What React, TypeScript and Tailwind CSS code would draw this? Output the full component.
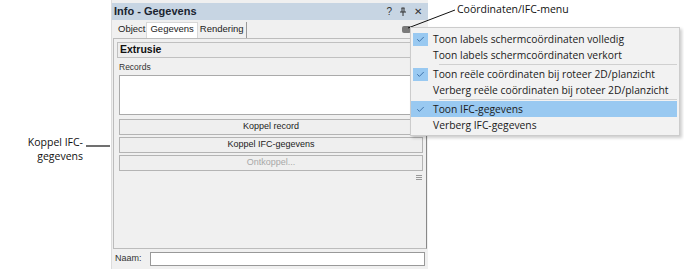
import { Check } from 'lucide-react';

const ui = { fontFamily: '"Liberation Sans", Arial, sans-serif' };
const menuFont = { fontFamily: '"Open Sans", "Noto Sans", sans-serif' };

function MenuItem({ label, checked, active }: { label: string; checked?: boolean; active?: boolean }) {
  return (
    <div className={`flex items-center h-[16px] ${active ? 'bg-[#99c9f1]' : ''}`}>
      <div className="w-[19px] shrink-0 flex justify-center">
        {checked && (
          <div className="w-[15px] h-[13px] bg-[#99c9f1] flex items-center justify-center">
            <Check className="w-[9px] h-[9px] text-[#3a6ea5]" strokeWidth={2.5} />
          </div>
        )}
      </div>
      <span className="ml-[3px] text-[10.3px] leading-[16px] whitespace-nowrap text-[#1a1a1a]">{label}</span>
    </div>
  );
}

function Btn({ label, disabled }: { label: string; disabled?: boolean }) {
  return (
    <div
      className={`h-[16px] border border-[#b4b4b4] bg-[#efefef] flex items-center justify-center text-[9px] ${
        disabled ? 'text-[#a8a8a8]' : 'text-[#222]'
      }`}
    >
      {label}
    </div>
  );
}

export default function App() {
  return (
    <div className="relative w-[684px] h-[269px] bg-white overflow-hidden" style={ui}>
      <div className="flex h-full">
        <div className="w-[111px]" />
        <div className="w-[317px] flex flex-col bg-[#f0f0f0] border-l border-[#dcdcdc]">
          {/* title */}
          <div className="mt-[3px] h-[17px] bg-[#c7d5e3] flex items-center px-[2px]">
            <span className="text-[11px] font-bold text-[#1a2430]">Info - Gegevens</span>
            <div className="ml-auto flex items-center gap-[7px] text-[10px] text-[#333] pr-[4px]">
              <span>?</span>
              <svg width="8" height="9" viewBox="0 0 8 9">
                <path d="M2.5 1h3M3 1v4M5 1v4M1 5h6M4 5v4" stroke="#333" strokeWidth="1" fill="none" />
              </svg>
              <span>✕</span>
            </div>
          </div>
          {/* tabs */}
          <div className="h-[18px] flex items-end text-[9.5px] text-[#222] pl-[5px] pr-[17px]">
            <div className="px-[1px] pb-[2px]">Object</div>
            <div className="px-[3px] pb-[2px] bg-white border-t border-x border-[#d8d8d8] h-[16px] flex items-center">Gegevens</div>
            <div className="px-[2px] pb-[2px] border-r border-[#999]">Rendering</div>
            <div className="ml-auto mb-[5px] w-[9px] h-[7px] rounded-[2px] bg-[#7a7a7a]" />
          </div>
          {/* content */}
          <div className="flex-1 mx-[1px] border border-[#bcbcbc] border-r-[#888] flex flex-col px-[3px] pt-[3px]">
            <div className="h-[16px] bg-[#eeeeee] border border-[#c0c0c0] flex items-center px-[2px]">
              <span className="text-[10.5px] font-bold text-[#111]">Extrusie</span>
            </div>
            <div className="mt-[4px] text-[8.5px] leading-[10px] text-[#333] pl-[2px]">Records</div>
            <div className="mt-[3px] ml-[2px] h-[40px] bg-white border border-[#aaaaaa]" />
            <div className="mt-[4px] ml-[2px] flex flex-col gap-[2px]">
              <Btn label="Koppel record" />
              <Btn label="Koppel IFC-gegevens" />
              <Btn label="Ontkoppel..." disabled />
            </div>
            <div className="flex justify-end pr-[1px] mt-[4px]">
              <div className="flex flex-col gap-[1px]">
                <div className="w-[6px] h-[1px] bg-[#999]" />
                <div className="w-[6px] h-[1px] bg-[#999]" />
                <div className="w-[6px] h-[1px] bg-[#999]" />
              </div>
            </div>
          </div>
          {/* naam */}
          <div className="h-[20px] flex items-center px-[3px] gap-[8px]">
            <span className="text-[9px] text-[#333]">Naam:</span>
            <div className="flex-1 h-[14px] bg-white border border-[#999]" />
          </div>
        </div>
      </div>

      {/* callouts */}
      <svg className="absolute left-0 top-0" width="684" height="269">
        <line x1="455" y1="10" x2="408" y2="28" stroke="#111" strokeWidth="1" />
        <line x1="86" y1="146" x2="110" y2="146" stroke="#111" strokeWidth="1.2" />
      </svg>
      <div className="absolute left-[457px] top-[1px] text-[10.5px] leading-[16px] text-[#111]" style={menuFont}>
        Coördinaten/IFC-menu
      </div>
      <div className="absolute left-[10px] top-[135px] w-[73px] text-right text-[10.5px] leading-[14px] text-[#111]" style={menuFont}>
        Koppel IFC-
        <br />
        gegevens
      </div>

      {/* dropdown menu */}
      <div
        className="absolute left-[410px] top-[27px] w-[270px] bg-[#f2f2f2] border border-[#cccccc] shadow-[2px_2px_3px_rgba(0,0,0,0.2)] pt-[3px] pb-[2px] pr-[2px]"
        style={menuFont}
      >
        <MenuItem label="Toon labels schermcoördinaten volledig" checked />
        <MenuItem label="Toon labels schermcoördinaten verkort" />
        <div className="ml-[28px] my-[1px] h-[1px] bg-[#d0d0d0]" />
        <MenuItem label="Toon reële coördinaten bij roteer 2D/planzicht" checked />
        <MenuItem label="Verberg reële coördinaten bij roteer 2D/planzicht" />
        <div className="ml-[28px] my-[1px] h-[1px] bg-[#d0d0d0]" />
        <MenuItem label="Toon IFC-gegevens" checked active />
        <MenuItem label="Verberg IFC-gegevens" />
      </div>
    </div>
  );
}
